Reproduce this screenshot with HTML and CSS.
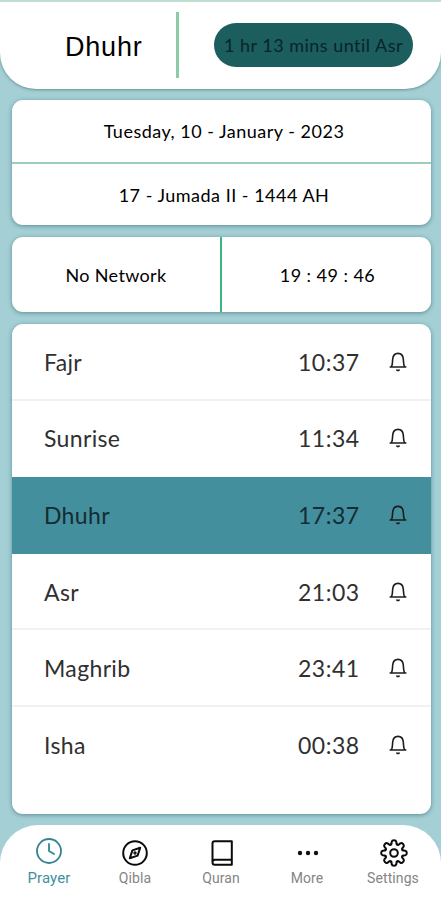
FILE: index.html
```html
<!DOCTYPE html>
<html lang="en">
<head>
<meta charset="utf-8">
<title>Prayer times</title>
<link rel="stylesheet" href="styles.css">
</head>
<body>
<svg class="defs" aria-hidden="true">
  <symbol id="bell" viewBox="0 0 18 20">
    <path d="M1.2 15H16.8M2.3 14.8C3.8 12.8 3.3 10.4 3.7 7C4.1 3.3 6 1.4 9 1.4S13.9 3.3 14.3 7C14.7 10.4 14.2 12.8 15.7 14.8" fill="none" stroke="currentColor" stroke-width="1.6" stroke-linecap="round" stroke-linejoin="round"/>
    <path d="M6.9 17.4H11.1C10.9 19.9 7.1 19.9 6.9 17.4Z" fill="currentColor"/>
  </symbol>
</svg>
<div class="app">
  <header class="header">
    <h1 class="current">Dhuhr</h1>
    <span class="header-line"></span>
    <div class="pill"><span>1 hr 13 mins until Asr</span></div>
  </header>
  <main class="content">
    <section class="card dates">
      <div class="date"><span>Tuesday, 10 - January - 2023</span></div>
      <div class="date"><span>17 - Jumada II - 1444 AH</span></div>
    </section>
    <section class="card status">
      <div class="network"><span>No Network</span></div>
      <div class="clock"><span>19 : 49 : 46</span></div>
    </section>
    <section class="card times">
      <div class="row"><span class="name">Fajr</span><span class="time">10:37</span><svg class="bell"><use href="#bell"/></svg></div>
      <div class="row"><span class="name">Sunrise</span><span class="time">11:34</span><svg class="bell"><use href="#bell"/></svg></div>
      <div class="row active"><span class="name">Dhuhr</span><span class="time">17:37</span><svg class="bell"><use href="#bell"/></svg></div>
      <div class="row"><span class="name">Asr</span><span class="time">21:03</span><svg class="bell"><use href="#bell"/></svg></div>
      <div class="row"><span class="name">Maghrib</span><span class="time">23:41</span><svg class="bell"><use href="#bell"/></svg></div>
      <div class="row"><span class="name">Isha</span><span class="time">00:38</span><svg class="bell"><use href="#bell"/></svg></div>
    </section>
  </main>
  <nav class="nav">
    <a class="tab selected">
      <svg class="icon" viewBox="-14 -14 28 28"><circle r="12"/><path d="M0 -7V0L5 3"/></svg>
      <span>Prayer</span>
    </a>
    <a class="tab">
      <svg class="icon" viewBox="-14 -14 28 28"><circle r="11.8"/><path d="M5.2 -5.2L2.6 2.6L-5.2 5.2L-2.6 -2.6Z"/><circle r=".7"/></svg>
      <span>Qibla</span>
    </a>
    <a class="tab">
      <svg class="icon" viewBox="-14 -14 28 28"><path d="M-9.5 9.5V-9.5Q-9.5 -11.8 -7.2 -11.8H9.8V11.8H-7.2Q-9.5 11.8 -9.5 9.3Q-9.5 6.8 -7.2 6.8H9.8"/></svg>
      <span>Quran</span>
    </a>
    <a class="tab">
      <svg class="icon dots" viewBox="-14 -14 28 28"><circle cx="-8" r="2.2"/><circle r="2.2"/><circle cx="8" r="2.2"/></svg>
      <span>More</span>
    </a>
    <a class="tab">
      <svg class="icon" viewBox="-14 -14 28 28">
        <circle r="3.8"/>
        <path id="cog" d="M-3.5 -8.4Q-2.6 -8.2 -2.5 -9.4L-2.3 -11.3Q-2 -12.8 0 -12.8Q2 -12.8 2.3 -11.3L2.5 -9.4Q2.6 -8.2 3.5 -8.4"/>
        <use href="#cog" transform="rotate(45)"/><use href="#cog" transform="rotate(90)"/><use href="#cog" transform="rotate(135)"/><use href="#cog" transform="rotate(180)"/><use href="#cog" transform="rotate(225)"/><use href="#cog" transform="rotate(270)"/><use href="#cog" transform="rotate(315)"/>
      </svg>
      <span>Settings</span>
    </a>
  </nav>
</div>
</body>
</html>
```
FILE: styles.css
```css
* { box-sizing: border-box; }
body { margin: 0; background: #a3cfd5; font-family: Lato, "Liberation Sans", sans-serif; color: #111; }
.defs { display: block; width: 0; height: 0; }
.app { width: 441px; height: 900px; display: flex; flex-direction: column; overflow: hidden; border-top: 2px solid #c0ddd2; background: linear-gradient(#fff 0 40px, #a3cfd5 40px); }
.header { height: 87px; flex: none; display: flex; align-items: center; background: #fff; border-radius: 0 0 36px 36px; box-shadow: 0 1px 3px rgba(70, 105, 105, .6); }
.current { width: 176px; margin: 0; padding: 2px 0 0 65px; font-family: "Liberation Sans", sans-serif; font-size: 27px; font-weight: 400; line-height: 32px; letter-spacing: .8px; color: #000; }
.header-line { width: 3px; height: 66px; margin-top: -1px; background: #8acda6; }
.pill { width: 199px; height: 44px; margin: -1px 0 0 35px; border-radius: 22px; background: #1c5d5d; color: #07252c; display: flex; align-items: center; justify-content: center; font-size: 18px; letter-spacing: .48px; white-space: nowrap; }
.content { padding: 11px 10px 0 12px; display: flex; flex-direction: column; gap: 12px; flex: none; }
.card { background: #fff; border-radius: 11px; overflow: hidden; box-shadow: 0 1px 4px rgba(50, 95, 100, .6); font-size: 18px; color: #000; }
.dates { height: 125px; letter-spacing: .5px; }
.date { height: 62px; display: flex; align-items: center; justify-content: center; white-space: nowrap; padding-left: 5px; }
.date:first-child { height: 64px; border-bottom: 2px solid #9bcdb7; padding-bottom: 1px; }
.status { height: 75px; display: flex; }
.network, .clock { display: flex; align-items: center; justify-content: center; padding-top: 1px; letter-spacing: .35px; }
.network { width: 210px; border-right: 2px solid #3bb77e; }
.clock { flex: 1; padding-left: 2px; letter-spacing: .45px; }
.times { height: 490px; }
.row { height: 76.6px; padding: 1px 24px 0 32px; border-bottom: 2px solid #f1f1f1; display: flex; align-items: center; font-size: 23px; color: #303030; }
.row:nth-child(2), .row:last-child { border-bottom-color: transparent; }
.row.active { background: #438f9e; border-bottom-color: #438f9e; color: #142c34; }
.name { flex: 1; letter-spacing: .35px; }
.time { width: 63px; letter-spacing: .5px; white-space: nowrap; }
.bell { width: 18px; height: 20px; margin-left: 28px; color: #1c1c1c; }
.nav { flex: 1; margin-top: 11.4px; background: #fff; border-radius: 38px 38px 0 0; display: flex; padding: 14px 5px 0 6px; }
.tab { width: 86px; flex: none; display: flex; flex-direction: column; align-items: center; color: #858585; font: 400 14px/18px Roboto, sans-serif; letter-spacing: .1px; }
.icon { width: 28px; height: 28px; margin-bottom: 2px; fill: none; stroke: #0b0b0b; stroke-width: 2; stroke-linecap: round; stroke-linejoin: round; }
.tab:nth-child(n + 3) .icon { transform: translateX(1px); }
.dots { fill: #111; stroke: none; }
.selected { color: #438f9e; font-size: 15px; }
.selected .icon { stroke: #348493; margin-top: -2px; margin-bottom: 4px; stroke-width: 1.8; }
```
